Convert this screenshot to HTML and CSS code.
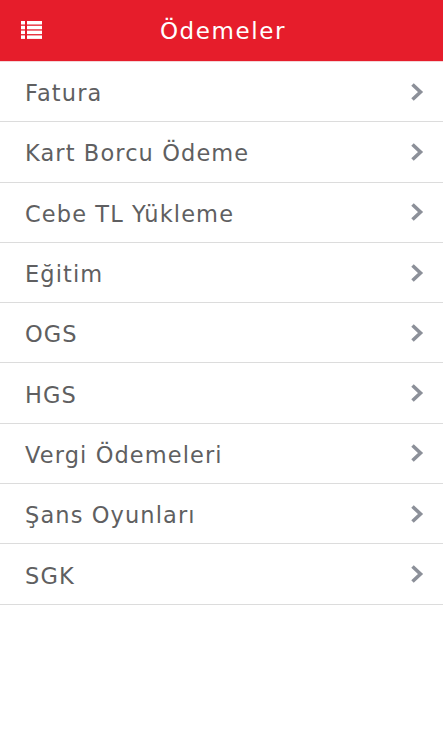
FILE: index.html
```html
<!DOCTYPE html>
<html lang="tr">
<head>
    <meta charset="UTF-8">
    <meta name="viewport" content="width=device-width, initial-scale=1.0">
    <title>Ödemeler</title>
    <link rel="stylesheet" href="styles.css">
</head>
<body>
    <div class="topbar">
        <svg class="menu-icon" width="21" height="18" viewBox="0 0 21 18">
            <rect x="0" y="0" width="4" height="3.5" fill="#fff"/>
            <rect x="6" y="0" width="15" height="3.5" fill="#fff"/>
            <rect x="0" y="4.8" width="4" height="3.5" fill="#fff"/>
            <rect x="6" y="4.8" width="15" height="3.5" fill="#fff"/>
            <rect x="0" y="9.6" width="4" height="3.5" fill="#fff"/>
            <rect x="6" y="9.6" width="15" height="3.5" fill="#fff"/>
            <rect x="0" y="14.4" width="4" height="3.5" fill="#fff"/>
            <rect x="6" y="14.4" width="15" height="3.5" fill="#fff"/>
        </svg>
        <h1>Ödemeler</h1>
    </div>

    <ul class="menu">
        <li><span>Fatura</span><svg class="chev" width="14" height="20" viewBox="0 0 14 20"><path d="M2.5 2.5 L10.5 10 L2.5 17.5" fill="none" stroke="#8c9099" stroke-width="3.6"/></svg></li>
        <li><span>Kart Borcu Ödeme</span><svg class="chev" width="14" height="20" viewBox="0 0 14 20"><path d="M2.5 2.5 L10.5 10 L2.5 17.5" fill="none" stroke="#8c9099" stroke-width="3.6"/></svg></li>
        <li><span>Cebe TL Yükleme</span><svg class="chev" width="14" height="20" viewBox="0 0 14 20"><path d="M2.5 2.5 L10.5 10 L2.5 17.5" fill="none" stroke="#8c9099" stroke-width="3.6"/></svg></li>
        <li><span>Eğitim</span><svg class="chev" width="14" height="20" viewBox="0 0 14 20"><path d="M2.5 2.5 L10.5 10 L2.5 17.5" fill="none" stroke="#8c9099" stroke-width="3.6"/></svg></li>
        <li><span>OGS</span><svg class="chev" width="14" height="20" viewBox="0 0 14 20"><path d="M2.5 2.5 L10.5 10 L2.5 17.5" fill="none" stroke="#8c9099" stroke-width="3.6"/></svg></li>
        <li><span>HGS</span><svg class="chev" width="14" height="20" viewBox="0 0 14 20"><path d="M2.5 2.5 L10.5 10 L2.5 17.5" fill="none" stroke="#8c9099" stroke-width="3.6"/></svg></li>
        <li><span>Vergi Ödemeleri</span><svg class="chev" width="14" height="20" viewBox="0 0 14 20"><path d="M2.5 2.5 L10.5 10 L2.5 17.5" fill="none" stroke="#8c9099" stroke-width="3.6"/></svg></li>
        <li><span>Şans Oyunları</span><svg class="chev" width="14" height="20" viewBox="0 0 14 20"><path d="M2.5 2.5 L10.5 10 L2.5 17.5" fill="none" stroke="#8c9099" stroke-width="3.6"/></svg></li>
        <li><span>SGK</span><svg class="chev" width="14" height="20" viewBox="0 0 14 20"><path d="M2.5 2.5 L10.5 10 L2.5 17.5" fill="none" stroke="#8c9099" stroke-width="3.6"/></svg></li>
    </ul>
</body>
</html>
```

FILE: styles.css
```css
body {
    margin: 0;
    background-color: #ffffff;
    font-family: "DejaVu Sans", "Open Sans", sans-serif;
}

.topbar {
    display: flex;
    align-items: center;
    justify-content: center;
    background-color: #e61d2b;
    height: 62px;
    border-bottom: 1px solid #f3d6d8;
    box-sizing: border-box;
}

.menu-icon {
    position: absolute;
    left: 21px;
    top: 21px;
}

.topbar h1 {
    margin: 0 0 0 3px;
    color: #ffffff;
    font-size: 23px;
    font-weight: 400;
    letter-spacing: 1.6px;
}

.menu {
    list-style: none;
    margin: 0;
    padding: 0;
}

.menu li {
    display: flex;
    align-items: center;
    justify-content: space-between;
    height: 59.3px;
    padding: 0 19px 0 25px;
    border-bottom: 1px solid #dcdcdc;
}

.menu li span {
    padding-top: 3px;
    color: #5f5f61;
    font-size: 22.5px;
    letter-spacing: 1.1px;
}

.chev {
    display: block;
}
```
